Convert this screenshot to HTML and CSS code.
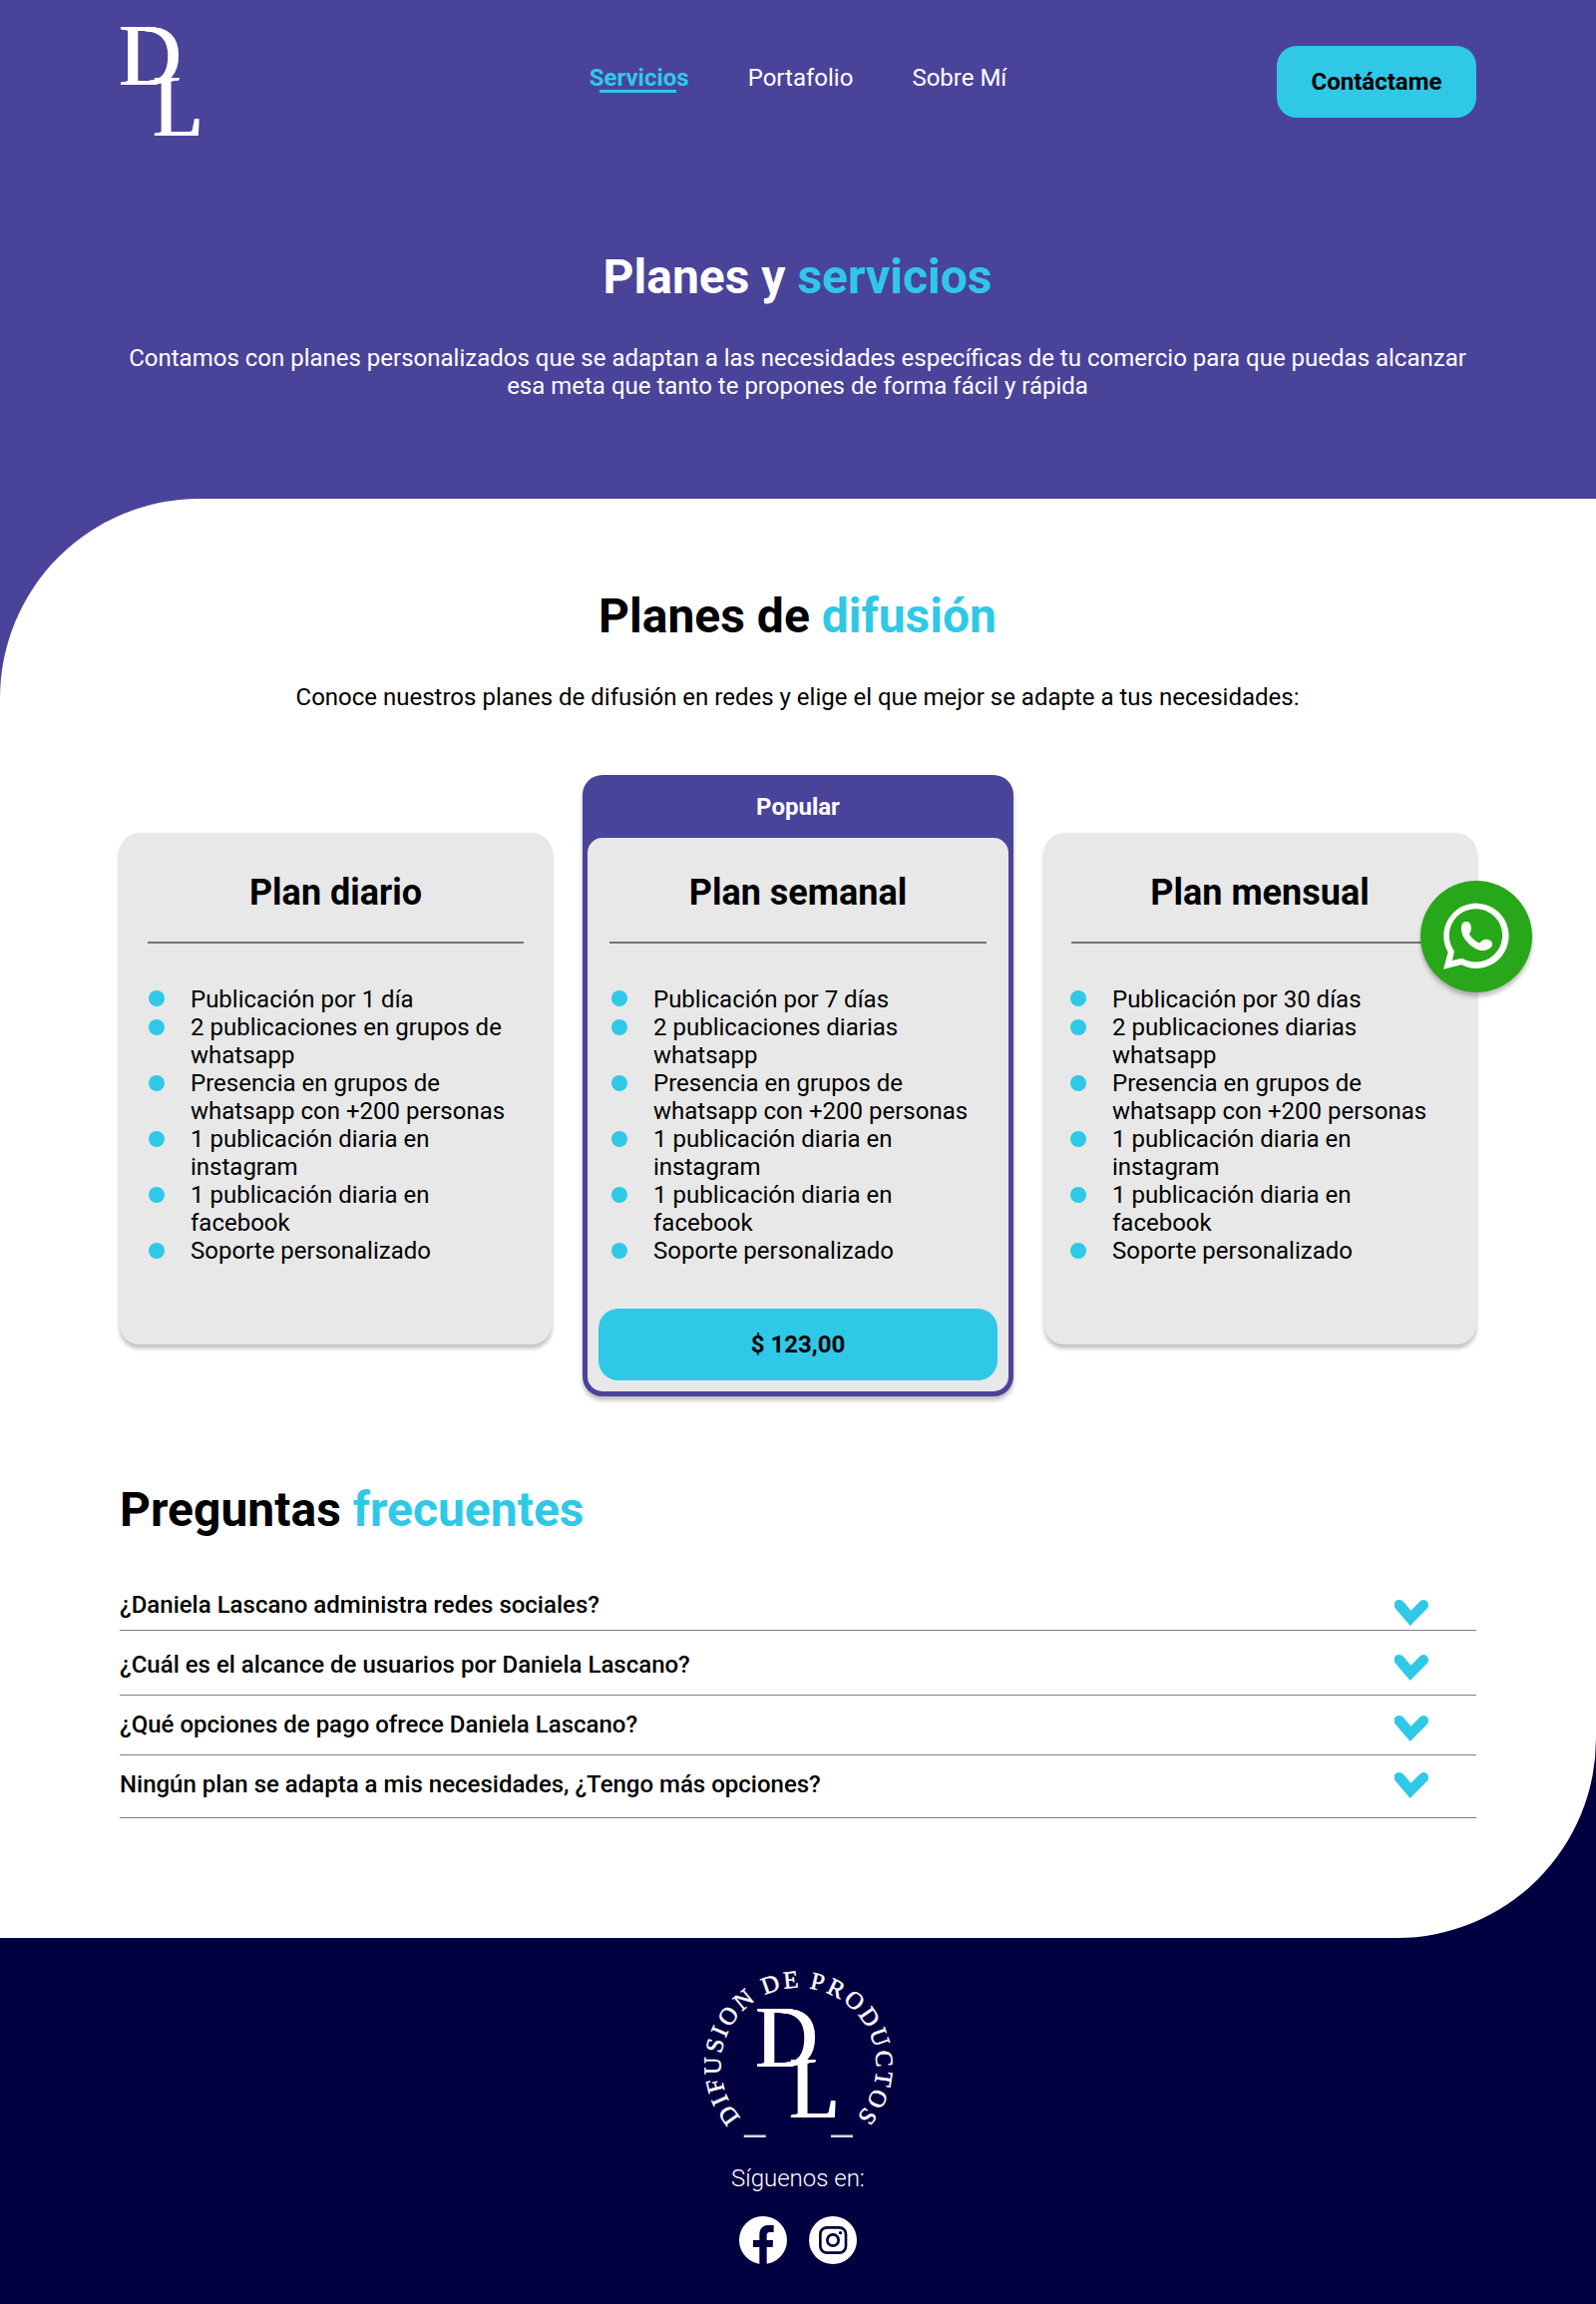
FILE: index.html
```html
<!DOCTYPE html>
<html lang="es">
<head>
<meta charset="utf-8">
<title>Planes y servicios</title>
<link rel="stylesheet" href="styles.css">
</head>
<body>
<svg class="defs" width="0" height="0">
  <symbol id="monogram" viewBox="120 26 84 112" overflow="visible">
    <text class="mono-letter" x="118.600" y="85" textLength="62" lengthAdjust="spacingAndGlyphs">D</text>
    <text class="mono-letter" x="152.500" y="136" textLength="50" lengthAdjust="spacingAndGlyphs">L</text>
  </symbol>
  <symbol id="chevron" viewBox="174 71 102 78">
    <path d="M221 149L177 97A15 15 0 0 1 188 71Q196 71 202 78L223 103L250 76A15 15 0 0 1 272 97Z"/>
  </symbol>
</svg>
<div class="hero">
  <header class="topbar">
    <svg class="logo"><use class="mono" href="#monogram"/></svg>
    <nav class="nav">
      <a class="nav-link active">Servicios</a>
      <a class="nav-link">Portafolio</a>
      <a class="nav-link">Sobre Mí</a>
    </nav>
    <a class="contact">Contáctame</a>
  </header>
  <h1 class="title">Planes y <span class="accent">servicios</span></h1>
  <p class="lead">Contamos con planes personalizados que se adaptan a las necesidades específicas de tu comercio para que puedas alcanzar esa meta que tanto te propones de forma fácil y rápida</p>
</div>
<div class="backdrop">
  <main class="content">
    <h2 class="title">Planes de <span class="accent">difusión</span></h2>
    <p class="intro">Conoce nuestros planes de difusión en redes y elige el que mejor se adapte a tus necesidades:</p>
    <section class="plans">
      <article class="plan">
        <h3 class="plan-name">Plan diario</h3>
        <ul class="features">
          <li>Publicación por 1 día</li>
          <li>2 publicaciones en grupos de whatsapp</li>
          <li>Presencia en grupos de whatsapp con +200 personas</li>
          <li>1 publicación diaria en instagram</li>
          <li>1 publicación diaria en facebook</li>
          <li>Soporte personalizado</li>
        </ul>
      </article>
      <article class="popular">
        <div class="popular-label">Popular</div>
        <div class="plan plan-inner">
          <h3 class="plan-name">Plan semanal</h3>
          <ul class="features">
            <li>Publicación por 7 días</li>
            <li>2 publicaciones diarias whatsapp</li>
            <li>Presencia en grupos de whatsapp con +200 personas</li>
            <li>1 publicación diaria en instagram</li>
            <li>1 publicación diaria en facebook</li>
            <li>Soporte personalizado</li>
          </ul>
          <a class="price">$ 123,00</a>
        </div>
      </article>
      <article class="plan plan-month">
        <h3 class="plan-name">Plan mensual</h3>
        <ul class="features">
          <li>Publicación por 30 días</li>
          <li>2 publicaciones diarias whatsapp</li>
          <li>Presencia en grupos de whatsapp con +200 personas</li>
          <li>1 publicación diaria en instagram</li>
          <li>1 publicación diaria en facebook</li>
          <li>Soporte personalizado</li>
        </ul>
        <a class="whatsapp" aria-label="WhatsApp">
          <svg viewBox="72 69 336 336" fill="#fff">
            <path fill-rule="evenodd" d="M141 335L155 284A98 98 0 1 1 195 322ZM168 309L197 302A80 80 0 1 0 174 281Z"/>
            <path d="M195 208C196 194 206 189 216 193C224 198 226 208 224 218C223 224 217 228 220 232C226 242 237 251 247 256C252 258 254 250 259 248C269 243 284 246 288 256C290 268 279 276 266 279C250 281 231 272 216 257C202 243 193 226 195 208Z"/>
          </svg>
        </a>
      </article>
    </section>
    <section class="faq">
      <h2 class="title faq-title">Preguntas <span class="accent">frecuentes</span></h2>
      <ul class="questions">
        <li class="question q1"><span>¿Daniela Lascano administra redes sociales?</span><svg class="chevron"><use href="#chevron"/></svg></li>
        <li class="question q2"><span>¿Cuál es el alcance de usuarios por Daniela Lascano?</span><svg class="chevron"><use href="#chevron"/></svg></li>
        <li class="question q3"><span>¿Qué opciones de pago ofrece Daniela Lascano?</span><svg class="chevron"><use href="#chevron"/></svg></li>
        <li class="question q4"><span>Ningún plan se adapta a mis necesidades, ¿Tengo más opciones?</span><svg class="chevron"><use href="#chevron"/></svg></li>
      </ul>
    </section>
  </main>
</div>
<footer class="footer">
  <svg class="emblem" viewBox="700 1970 200 180">
    <path id="ring" fill="none" d="M742.5 2123A78 78 0 1 1 858.5 2123"/>
    <text class="ring-text"><textPath href="#ring" textLength="358" lengthAdjust="spacing">DIFUSION DE PRODUCTOS</textPath></text>
    <use class="mono" href="#monogram" x="758" y="2013" width="84" height="112"/>
    <path d="M745.7 2141.7h22M833 2141.7h22" stroke="#d9d9ea" stroke-width="2.5"/>
  </svg>
  <p class="follow">Síguenos en:</p>
  <div class="social">
    <svg viewBox="123 216 144 144">
      <circle cx="195" cy="288" r="72" fill="#fff"/>
      <path fill="#000040" d="M184 362V309H165V288H184V272C184 252 196 243 212 243H227V264H216C208 264 206 268 206 276V288H225L224 309H206V362Z"/>
    </svg>
    <svg viewBox="333 216 144 144">
      <circle cx="405" cy="288" r="72" fill="#fff"/>
      <g fill="none" stroke="#000040" stroke-width="8">
        <rect x="367" y="250" width="77" height="76" rx="20"/>
        <circle cx="405" cy="288" r="17"/>
      </g>
      <circle cx="427.500" cy="266" r="5" fill="#000040"/>
    </svg>
  </div>
</footer>
</body>
</html>
```
FILE: styles.css
```css
* { box-sizing: border-box; margin: 0; padding: 0; }
body {
  width: 1600px;
  font: 400 24px/28px Roboto, "Liberation Sans", sans-serif;
  color: #000;
  background: #000040;
}
ul { list-style: none; }
.defs { position: absolute; }
.accent { color: #2fc9e7; }
.title { padding-right: 1px; font-size: 48px; line-height: 56px; font-weight: 700; text-align: center; }

.hero { height: 500px; padding: 0 120px; background: #4a439a; color: #fff; }
.topbar { display: grid; grid-template-columns: 1fr auto 1fr; align-items: center; height: 164px; }
.logo { width: 84px; height: 112px; fill: #fff; overflow: visible; }
.mono-letter { font: 400 89px "Liberation Serif", serif; fill: #fff; }
/* widens the vertical stems and leaves the hairlines thin */
.mono { filter: drop-shadow(1.5px 0 0 #fff) drop-shadow(1.5px 0 0 #fff); }
.nav { display: flex; gap: 59px; margin-bottom: 8px; }
.nav-link { position: relative; }
.active { color: #2fc9e7; font-weight: 700; }
.active::after { content: ""; position: absolute; left: 10px; top: 26px; width: 77px; height: 3px; background: #2fc9e7; }
.contact {
  justify-self: end;
  width: 200px;
  border-radius: 20px;
  background: #2fc9e7;
  color: #000;
  font-weight: 700;
  line-height: 72px;
  text-align: center;
}
.hero .title { margin-top: 86px; }
.lead { margin-top: 39px; padding-right: 1px; text-align: center; }

.backdrop { background: linear-gradient(#4a439a 50%, #000040 50%); }
.content { height: 1443px; padding: 90px 120px 0; background: #fff; border-radius: 200px 0 200px 0; }
.intro { margin-top: 39px; padding-right: 1px; text-align: center; }

.plans { display: grid; grid-template-columns: 433px 432px 433px; gap: 31px; margin-top: 64px; }
.plan {
  position: relative;
  height: 513px;
  margin-top: 58px;
  padding: 39px 28px 0;
  border-radius: 20px;
  background: #e8e8e8;
  box-shadow: 0 4px 4px rgba(0, 0, 0, .25);
}
.plan-name { height: 72px; border-bottom: 2px solid #747474; font-size: 36px; line-height: 42px; text-align: center; }
.features { margin-top: 42px; padding-left: 43px; }
.features li { position: relative; }
.features li::before {
  content: "";
  position: absolute;
  left: -42px;
  top: 6px;
  width: 16px;
  height: 16px;
  border-radius: 50%;
  background: #2fc9e7;
}
.features li:first-child::before { top: 5px; }
.popular { height: 623px; padding: 0 5px 5px; border-radius: 20px; background: #4a439a; box-shadow: 0 4px 4px rgba(0, 0, 0, .25); }
.popular-label { height: 63px; padding-top: 18px; color: #fff; font-weight: 700; text-align: center; }
.plan-inner { height: 555px; margin: 0; padding: 34px 22px 0; border-radius: 15px; box-shadow: none; }
.plan-inner .features { padding-left: 44px; }
.price {
  display: block;
  margin: 44px -11px 0;
  border-radius: 20px;
  background: #2fc9e7;
  font-weight: 700;
  line-height: 72px;
  text-align: center;
}
.plan-month { padding-left: 27px; }
.plan-month .features { padding-left: 41px; }
.whatsapp {
  position: absolute;
  right: -56px;
  top: 48px;
  width: 112px;
  height: 112px;
  border-radius: 50%;
  background: #29a71a;
  box-shadow: 0 4px 4px rgba(0, 0, 0, .25);
}
.whatsapp svg { display: block; }

.faq { margin-top: 86px; }
.faq-title { text-align: left; }
.questions { margin-top: 53px; }
.question { display: flex; justify-content: space-between; align-items: flex-start; padding-right: 48px; border-bottom: 1px solid #808080; font-weight: 500; }
.chevron { width: 34px; height: 26px; fill: #2fc9e7; }
.q1 { height: 40px; }
.q1 .chevron { margin-top: 9px; }
.q2 { height: 65px; padding-top: 20px; }
.q2 .chevron { margin-top: 4px; }
.q3 { height: 60px; padding-top: 15px; }
.q3 .chevron { margin-top: 5px; }
.q4 { height: 63px; padding-top: 15px; }
.q4 .chevron { margin-top: 2px; }

.footer { display: flex; flex-direction: column; align-items: center; height: 367px; padding-top: 27px; background: #000040; color: #fff; }
.emblem { width: 200px; height: 180px; }
.ring-text { font: 400 24.5px "Liberation Serif", serif; fill: #fff; stroke: #fff; stroke-width: .5px; word-spacing: -1.5px; }
.follow { margin-top: 20px; font-weight: 300; }
.social { display: flex; gap: 22px; margin-top: 24px; }
.social svg { width: 48px; height: 48px; }
```
